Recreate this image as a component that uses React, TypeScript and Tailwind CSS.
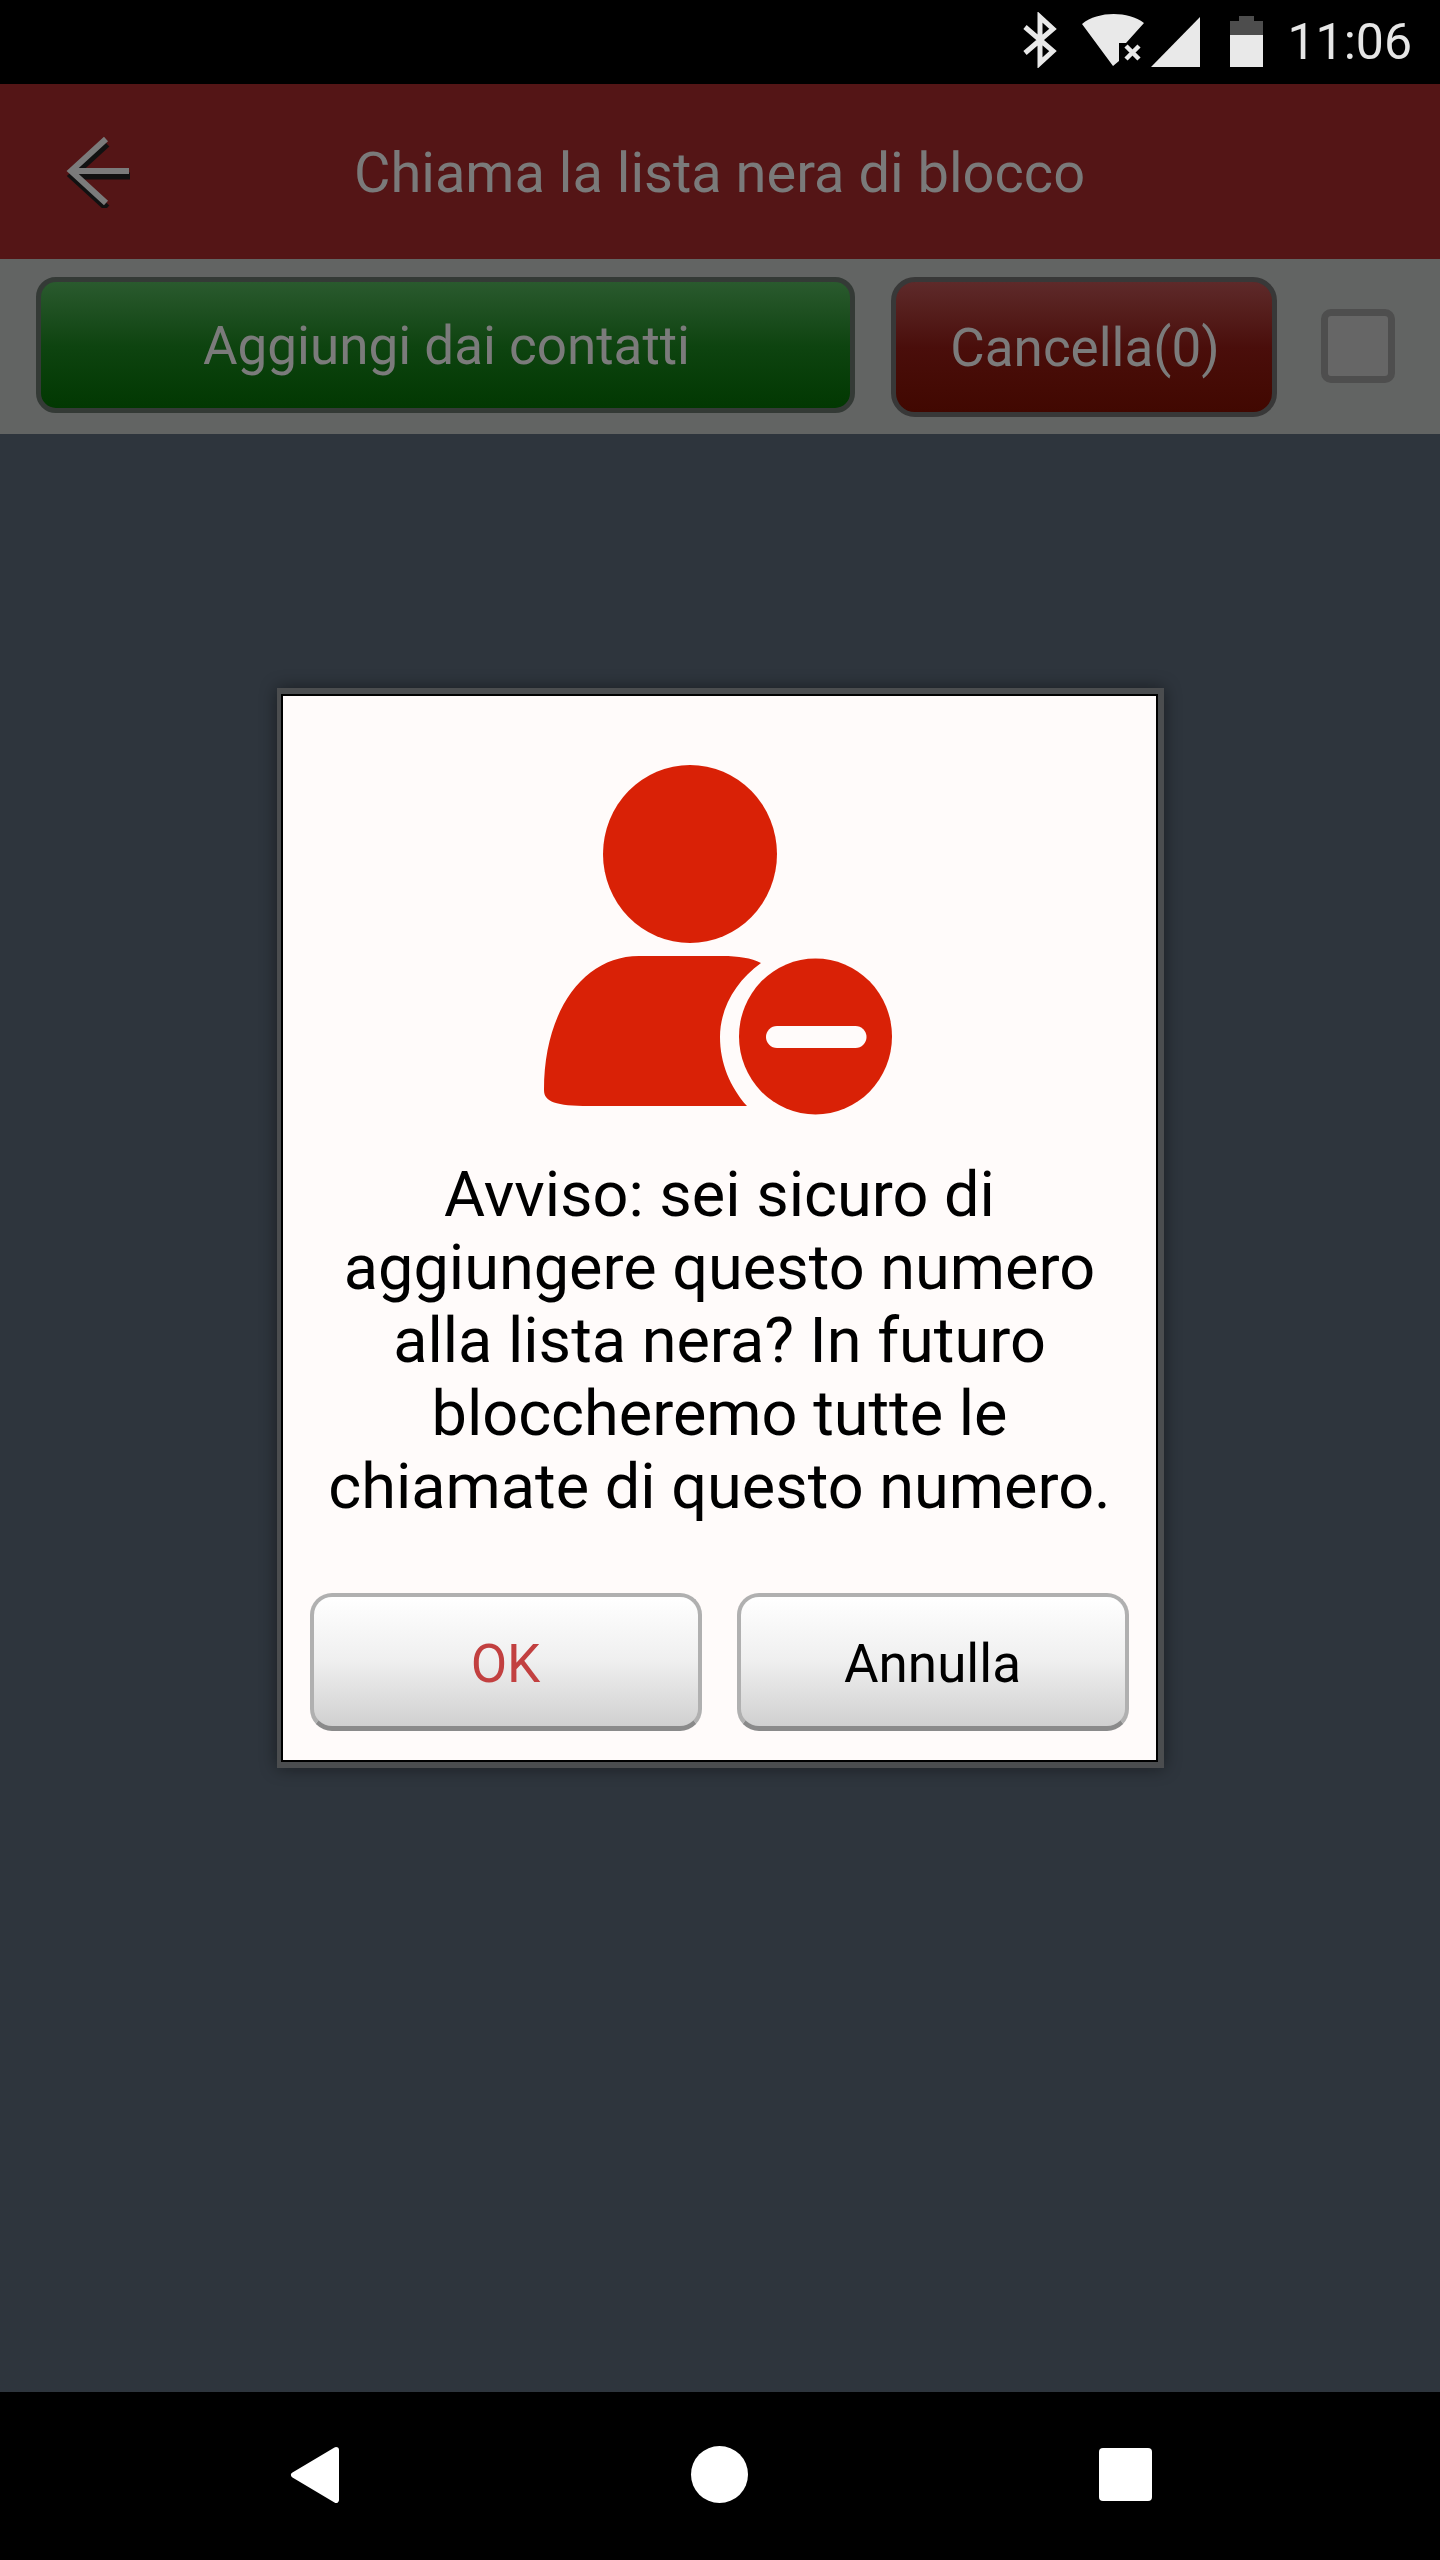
import React from 'react';

const roboto = "font-['Roboto',sans-serif]";

const StatusIcons = () => (
  <svg width="244" height="56" viewBox="0 0 244 56" className="block">
    {/* bluetooth */}
    <path d="M3 15 L31 39 L18 51 V5 L31 17 L3 41" fill="none" stroke="#e9e9e9" strokeWidth="5" />
    {/* wifi, no data */}
    <path d="M60 12 C76 -1 106 -1 122 11 L104 31 H97 V49 L91 54 Z" fill="#e9e9e9" />
    <path d="M104 34 L117 47 M117 34 L104 47" stroke="#e9e9e9" strokeWidth="4.5" fill="none" />
    {/* signal */}
    <path d="M129 55 L178 5 V55 Z" fill="#e9e9e9" />
    {/* battery */}
    <path d="M217 4 H232 V9 H241 V23 H208 V9 H217 Z" fill="#4d4d4d" />
    <path d="M208 23 H241 V55 H208 Z" fill="#e9e9e9" />
  </svg>
);

const BlockedUserIcon = () => (
  <svg width="350" height="350" viewBox="0 0 350 350" className="block">
    <ellipse cx="146" cy="89" rx="87" ry="89" fill="#d92106" />
    <path
      d="M217 198 C207 193 195 191 178 191 H95 C40 191 0 245 0 325 C0 337 12 341 45 341 H203 C186 322 176 298 176 272 C176 243 192 216 217 198 Z"
      fill="#d92106"
    />
    <ellipse cx="271.5" cy="271.5" rx="76.5" ry="78" fill="#d92106" />
    <rect x="222" y="261" width="100.5" height="22" rx="11" fill="#fffbfa" />
  </svg>
);

const BackArrow = () => (
  <svg width="68" height="72" viewBox="0 0 68 72" className="block">
    <path d="M63 37 H5 M40 5 L5 37 L40 69" fill="none" stroke="#111" strokeWidth="7" transform="translate(1 3)" />
    <path d="M63 35 H5 M40 3 L5 35 L40 67" fill="none" stroke="#7b7b7b" strokeWidth="6" />
  </svg>
);

const NavBar = () => (
  <div className="h-[168px] bg-black flex items-center shrink-0 pb-[3px]">
    <div className="w-[290px]" />
    <svg width="50" height="56" viewBox="0 0 50 56">
      <path d="M46 3 L4 28 L46 53 Z" fill="#fff" stroke="#fff" strokeWidth="6" strokeLinejoin="round" />
    </svg>
    <div className="w-[351px]" />
    <div className="w-[57px] h-[57px] rounded-full bg-white" />
    <div className="w-[351px]" />
    <div className="w-[53px] h-[53px] rounded-[4px] bg-white" />
  </div>
);

export default function App() {
  return (
    <div className={`w-[1440px] h-[2560px] flex flex-col bg-[#2e353d] overflow-hidden ${roboto}`}>
      <div className="h-[84px] bg-black flex items-center justify-end pr-[28px] shrink-0">
        <div className="-mt-[4px]"><StatusIcons /></div>
        <span className="text-[50px] leading-none text-[#e6e6e6] ml-[21px]">11:06</span>
      </div>

      <div className="h-[175px] bg-[#541516] flex items-center shrink-0">
        <div className="ml-[66px]"><BackArrow /></div>
        <span className="text-[56px] leading-none text-[#7a7a7a] ml-[220px] mt-[2px]">Chiama la lista nera di blocco</span>
      </div>

      <div className="h-[175px] bg-[#626463] flex items-start shrink-0 pt-[18px] pl-[36px]">
        <button className="w-[819px] h-[136px] rounded-[20px] border-[5px] border-[#343a36] bg-gradient-to-b from-[#2a5a2e] via-[#0e4410] to-[#023802] text-[53px] text-[#7b7b7b] flex items-center justify-center pt-[4px] pl-[2px]">
          Aggiungi dai contatti
        </button>
        <button className="w-[386px] h-[140px] ml-[36px] rounded-[24px] border-[5px] border-[#383838] bg-gradient-to-b from-[#5e2a2a] via-[#4a0e0b] to-[#410801] text-[53px] text-[#7b7b7b] flex items-center justify-center pt-[3px] pl-[2px]">
          Cancella(0)
        </button>
        <div className="w-[74px] h-[74px] ml-[44px] mt-[32px] rounded-[10px] border-[7px] border-[#4e4e4e] bg-[#666666]" />
      </div>

      <div className="flex-1 flex justify-center pt-[254px] pl-[1px]">
        <div className="w-[887px] h-[1080px] border-[4px] border-t-[6px] border-b-[6px] border-r-[6px] border-[#4b4d4f] shadow-[0_0_16px_rgba(0,0,0,0.45)]">
          <div className="h-full bg-[#fffbfa] border-[2px] border-black flex flex-col items-center">
            <div className="mt-[69px] -ml-[2px]"><BlockedUserIcon /></div>
            <p className="mt-[43px] text-[63px] leading-[73px] text-black text-center">
              Avviso: sei sicuro di<br />
              aggiungere questo numero<br />
              alla lista nera? In futuro<br />
              bloccheremo tutte le<br />
              chiamate di questo numero.
            </p>
            <div className="mt-[70px] flex gap-[35px] -ml-[1px]">
              <button className="w-[392px] h-[138px] rounded-[22px] border-[4px] border-[#b0b0b0] border-b-[5px] border-b-[#8a8a8a] bg-gradient-to-b from-white via-[#efefef] to-[#d0d0d0] text-[53px] text-[#c24040] flex items-center justify-center pt-[6px]">
                OK
              </button>
              <button className="w-[392px] h-[138px] rounded-[22px] border-[4px] border-[#b0b0b0] border-b-[5px] border-b-[#8a8a8a] bg-gradient-to-b from-white via-[#efefef] to-[#d0d0d0] text-[53px] text-black flex items-center justify-center pt-[6px]">
                Annulla
              </button>
            </div>
          </div>
        </div>
      </div>

      <NavBar />
    </div>
  );
}
